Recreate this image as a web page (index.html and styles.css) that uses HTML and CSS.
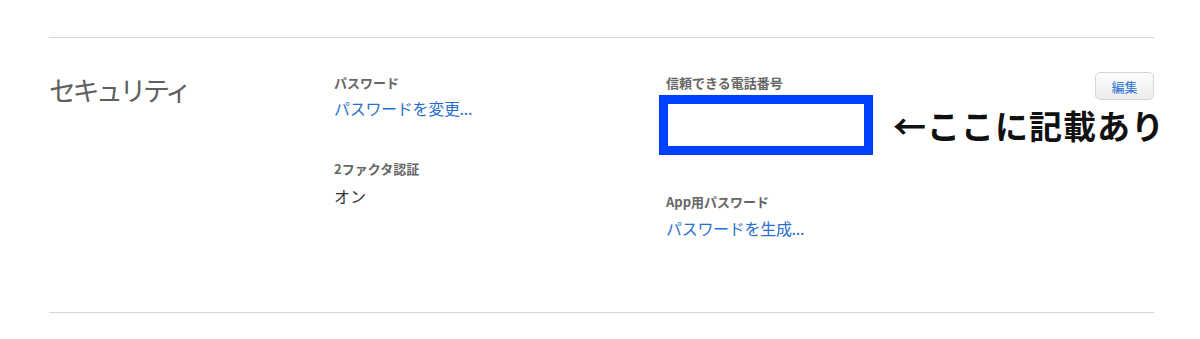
FILE: index.html
```html
<!DOCTYPE html>
<html lang="ja">
<head>
<meta charset="utf-8">
<link rel="stylesheet" href="styles.css">
</head>
<body>
<div class="page">
  <section class="section">
    <h2 class="title">セキュリティ</h2>
    <div class="col col-a">
      <div class="field">
        <div class="label">パスワード</div>
        <a class="link" href="#">パスワードを変更...</a>
      </div>
      <div class="field field-2">
        <div class="label">2ファクタ認証</div>
        <div class="value">オン</div>
      </div>
    </div>
    <div class="col col-b">
      <div class="field">
        <div class="label">信頼できる電話番号</div>
        <div class="phone-row">
          <div class="phone-box"></div>
          <div class="note">←ここに記載あり</div>
        </div>
      </div>
      <div class="field field-app">
        <div class="label">App用パスワード</div>
        <a class="link" href="#">パスワードを生成...</a>
      </div>
    </div>
    <button class="edit-btn" type="button">編集</button>
  </section>
</div>
</body>
</html>
```

FILE: styles.css
```css
* { box-sizing: border-box; }
html, body {
  margin: 0;
  padding: 0;
  background: #fff;
}
body {
  font-family: "Noto Sans CJK JP", "Noto Sans", sans-serif;
  color: #333;
}
.page {
  padding: 37px 46px 0 49px;
}
.section {
  position: relative;
  display: flex;
  border-top: 1px solid #d6d6d6;
  border-bottom: 1px solid #d6d6d6;
  height: 276px;
}
.title {
  width: 285px;
  flex-shrink: 0;
  margin: 32px 0 0 0;
  font-size: 27px;
  font-weight: 400;
  line-height: 40px;
  color: #5f5f5f;
  letter-spacing: -3.5px;
}
.col-a {
  width: 332px;
  flex-shrink: 0;
  padding-top: 35px;
}
.col-b {
  flex: 1;
  min-width: 0;
  padding-top: 35px;
}
.label {
  font-size: 13px;
  font-weight: 700;
  line-height: 20px;
  color: #666;
}
.link {
  display: block;
  margin-top: 4px;
  font-size: 16px;
  line-height: 22px;
  color: #2a6fcf;
  text-decoration: none;
  letter-spacing: -0.3px;
}
.value {
  margin-top: 6px;
  font-size: 16px;
  line-height: 22px;
  color: #333;
}
.field-2 { margin-top: 40px; }
.field-app { margin-top: 37px; }
.field-app .link { margin-top: 5px; }
.phone-row {
  display: flex;
  align-items: center;
  margin-top: 2px;
  margin-left: -7px;
}
.phone-box {
  flex-shrink: 0;
  width: 214px;
  height: 60px;
  border: 9px solid #0040ff;
  background: #fff;
}
.note {
  flex-shrink: 0;
  white-space: nowrap;
  margin-left: 20px;
  font-size: 33px;
  font-weight: 700;
  color: #111;
  letter-spacing: 1px;
  line-height: 40px;
}
.edit-btn {
  position: absolute;
  right: 0;
  top: 34px;
  width: 59px;
  height: 28px;
  padding: 0;
  font-family: inherit;
  font-size: 13px;
  color: #2a6fcf;
  background: linear-gradient(#fdfdfd, #ececec);
  border: 1px solid #d5d5d5;
  border-radius: 5px;
}
```
